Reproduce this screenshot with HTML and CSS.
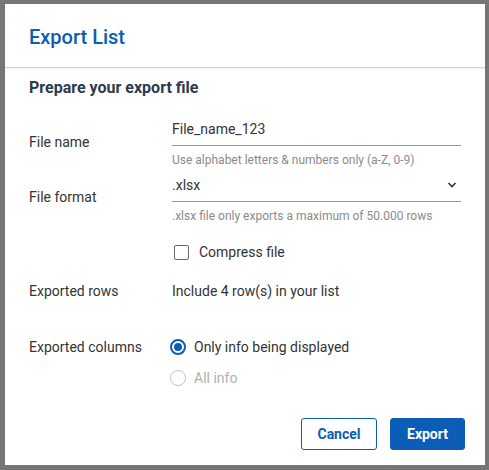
FILE: index.html
```html
<!DOCTYPE html>
<html>
<head>
<meta charset="utf-8">
<link rel="stylesheet" href="styles.css">
</head>
<body>
<div class="dialog">
  <div class="header"><h1 class="title">Export List</h1></div>
  <div class="content">
    <h2 class="subtitle">Prepare your export file</h2>
    <div class="row row-name">
      <div class="label label-name">File name</div>
      <div class="field">
        <div class="input">File_name_123</div>
        <div class="helper">Use alphabet letters &amp; numbers only (a-Z, 0-9)</div>
      </div>
    </div>
    <div class="row row-format">
      <div class="label label-format">File format</div>
      <div class="field">
        <div class="input select">.xlsx
          <svg class="chev" width="10" height="6" viewBox="0 0 10 6"><polyline points="1.5,1 5,4.5 8.5,1" fill="none" stroke="#333" stroke-width="1.6"/></svg>
        </div>
        <div class="helper">.xlsx file only exports a maximum of 50.000 rows</div>
      </div>
    </div>
    <div class="row row-check">
      <div class="label"></div>
      <div class="field check"><span class="box"></span><span>Compress file</span></div>
    </div>
    <div class="row row-rows">
      <div class="label">Exported rows</div>
      <div class="field value">Include 4 row(s) in your list</div>
    </div>
    <div class="row row-cols">
      <div class="label">Exported columns</div>
      <div class="field radios">
        <div class="radio on"><span class="dot"></span><span>Only info being displayed</span></div>
        <div class="radio off"><span class="dot"></span><span>All info</span></div>
      </div>
    </div>
    <div class="actions">
      <button class="btn btn-outline">Cancel</button>
      <button class="btn btn-primary">Export</button>
    </div>
  </div>
</div>
</body>
</html>
```
FILE: styles.css
```css
html, body { margin: 0; padding: 0; }
body {
  width: 489px; height: 470px; overflow: hidden;
  background: #767676;
  font-family: Roboto, "Liberation Sans", sans-serif;
  padding: 4px 0 0 5px;
  box-sizing: border-box;
}
.dialog {
  width: 480px; height: 461px;
  background: #fff;
  box-sizing: border-box;
  display: flex; flex-direction: column;
}
.header {
  height: 64px;
  border-bottom: 1px solid #d2d2d2;
  box-shadow: 0 1px 2px rgba(0,0,0,0.06);
  display: flex; align-items: center;
  padding: 0 24px;
  box-sizing: border-box;
}
.title {
  margin: 0; font-size: 20px; font-weight: 500; color: #0b5db5;
  line-height: 24px; padding-top: 2px;
}
.content { padding: 10px 24px 0 24px; display: flex; flex-direction: column; flex: 1; }
.subtitle {
  margin: 0; font-size: 16px; font-weight: 700; color: #2c3b4d; line-height: 20px;
}
.row { display: flex; }
.label { width: 143px; flex: none; font-size: 14px; color: #333; line-height: 20px; }
.field { flex: 1; font-size: 14px; color: #333; }
.row-name { margin-top: 14px; }
.label-name { padding-top: 20px; }
.input {
  height: 34px; border-bottom: 1px solid #9a9a9a; box-sizing: border-box;
  display: flex; align-items: center; line-height: 20px; padding-top: 0;
}
.select { justify-content: space-between; height: 34px; }
.chev { margin-right: 4px; }
.helper { font-size: 12px; color: #8b8b8b; line-height: 16px; margin-top: 6px; }
.row-format { margin-top: 0; }
.label-format { padding-top: 19px; }
.row-check { margin-top: 18px; }
.check { display: flex; align-items: center; gap: 10px; line-height: 20px; padding-left: 2px; }
.box { width: 13px; height: 13px; border: 1.5px solid #666; border-radius: 2px; flex: none; }
.row-rows { margin-top: 19px; }
.value { line-height: 20px; }
.row-cols { margin-top: 36px; }
.radios { display: flex; flex-direction: column; gap: 11px; margin-left: -2px; }
.radio { display: flex; align-items: center; gap: 8px; line-height: 20px; }
.dot {
  width: 16px; height: 16px; border-radius: 50%; box-sizing: border-box; flex: none;
  border: 2px solid #0b5db5; position: relative;
}
.radio.on .dot::after {
  content: ""; position: absolute; left: 2px; top: 2px; width: 8px; height: 8px;
  border-radius: 50%; background: #0b5db5;
}
.radio.off { color: #b0b0b0; }
.radio.off .dot { border: 1.5px solid #c4c4c4; }
.actions {
  margin-top: auto; display: flex; justify-content: flex-end; gap: 13px;
  padding-bottom: 15px; margin-right: -4px;
}
.btn {
  height: 32px; font-family: Roboto, "Liberation Sans", sans-serif;
  font-size: 14px; font-weight: 700; border-radius: 3px; box-sizing: border-box;
  padding: 0; cursor: pointer;
}
.btn-outline { width: 76px; background: #fff; color: #0b5db5; border: 1px solid #0b5db5; }
.btn-primary { width: 75px; background: #0b5db5; color: #fff; border: 1px solid #0b5db5; }
```
